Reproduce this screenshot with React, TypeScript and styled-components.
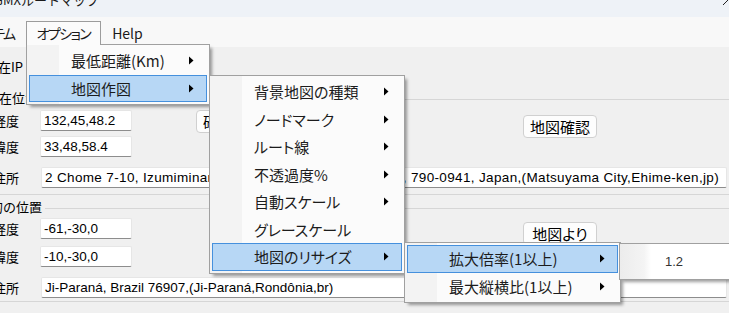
import React from "react";
import styled, { createGlobalStyle } from "styled-components";

type MenuEntry = { label: string; sub?: boolean; active?: boolean };

const optionMenu: MenuEntry[] = [
  { label: "最低距離(Km)", sub: true },
  { label: "地図作図", sub: true, active: true },
];

const drawMenu: MenuEntry[] = [
  { label: "背景地図の種類", sub: true },
  { label: "ノードマーク", sub: true },
  { label: "ルート線", sub: true },
  { label: "不透過度%", sub: true },
  { label: "自動スケール", sub: true },
  { label: "グレースケール" },
  { label: "地図のリサイズ", sub: true, active: true },
];

const resizeMenu: MenuEntry[] = [
  { label: "拡大倍率(1以上)", sub: true, active: true },
  { label: "最大縦横比(1以上)", sub: true },
];

const GlobalStyle = createGlobalStyle`
  html, body {
    margin: 0;
    padding: 0;
    background: #f0f0f0;
  }
  body {
    font-family: "Noto Sans CJK JP", "Liberation Sans", sans-serif;
  }
`;

const Window = styled.div`
  position: relative;
  width: 729px;
  height: 313px;
  overflow: hidden;
  background: #f0f0f0;
  display: flex;
  flex-direction: column;
`;

const TitleBar = styled.header`
  flex: none;
  height: 17px;
  background: #eef2f7;
  display: flex;
  justify-content: space-between;
  align-items: flex-start;
  overflow: hidden;
`;

const Title = styled.span`
  margin: -9px 0 0 -6px;
  font-size: 13px;
  line-height: 17px;
  color: #1a1a1a;
  white-space: nowrap;
`;

const CloseGlyph = styled.svg`
  flex: none;
  margin: -13px -12px 0 0;
`;

const MenuBar = styled.nav`
  flex: none;
  height: 30px;
  background: #f8f8f8;
  display: flex;
  align-items: flex-start;
  padding-top: 4px;
  box-sizing: border-box;
  font-size: 14px;
  font-feature-settings: "palt";
  color: #1a1a1a;
`;

const BarItem = styled.div<{ $open?: boolean; $shift?: number; $tight?: boolean }>`
  position: relative;
  z-index: 3;
  box-sizing: border-box;
  height: ${(p) => (p.$open ? 24 : 23)}px;
  margin-left: ${(p) => p.$shift ?? 0}px;
  padding: 0 10px;
  line-height: 22px;
  letter-spacing: ${(p) => (p.$tight ? "-1.6px" : "0")};
  border: 1px solid ${(p) => (p.$open ? "#9c9c9c" : "transparent")};
  border-bottom: none;
  background: ${(p) => (p.$open ? "#fbfbfb" : "transparent")};
  white-space: nowrap;
`;

const Form = styled.main`
  flex: 1;
  margin-left: -20px;
  padding-top: 12px;
  display: flex;
  flex-direction: column;
  font-size: 13px;
  color: #000;
`;

const IpLabel = styled.div`
  padding-left: 5px;
  line-height: 16px;
`;

const Group = styled.section<{ $mt: number; $pb: number }>`
  margin-top: ${(p) => p.$mt}px;
  padding-bottom: ${(p) => p.$pb}px;
  border-top: 1px solid #d6d6d6;
  border-bottom: 1px solid #d6d6d6;
`;

const Caption = styled.div<{ $indent: number }>`
  width: fit-content;
  margin: -10px 0 0 ${(p) => p.$indent}px;
  line-height: 16px;
  background: #f0f0f0;
  padding-right: 3px;
`;

const Fields = styled.div<{ $mt: number; $rows: string }>`
  margin-top: ${(p) => p.$mt}px;
  padding-left: 13px;
  display: grid;
  grid-template-columns: 47px 92px 64px 327px 74px 1fr;
  grid-template-rows: ${(p) => p.$rows};
  align-items: start;
`;

const FieldLabel = styled.label<{ $row: number }>`
  grid-column: 1;
  grid-row: ${(p) => p.$row};
  line-height: 21px;
  white-space: nowrap;
`;

const TextBox = styled.div<{ $row: number; $wide?: boolean; $spacing?: number }>`
  grid-column: ${(p) => (p.$wide ? "2 / -1" : "2")};
  grid-row: ${(p) => p.$row};
  margin: ${(p) => (p.$wide ? "0 2px 0 1px" : "0")};
  height: 21px;
  box-sizing: border-box;
  padding-left: 3px;
  background: #ffffff;
  border: 1px solid #e6e6e6;
  border-bottom-color: #8d8d8d;
  border-radius: 2px;
  font-family: "Liberation Sans", Arial, sans-serif;
  font-size: 13.5px;
  letter-spacing: ${(p) => p.$spacing ?? 0}px;
  line-height: 19px;
  white-space: nowrap;
  overflow: hidden;
`;

const FormButton = styled.button<{ $col: number; $span?: number; $mt?: number }>`
  grid-column: ${(p) => p.$col};
  grid-row: 1 / span ${(p) => p.$span ?? 1};
  justify-self: start;
  margin-top: ${(p) => p.$mt ?? 0}px;
  height: 23px;
  padding: 0 6px;
  min-width: 40px;
  background: #fdfdfd;
  border: 1px solid #d0d0d0;
  border-radius: 4px;
  font-family: "Noto Sans CJK JP", sans-serif;
  font-feature-settings: "palt";
  font-size: 15px;
  line-height: 20px;
  color: #000;
`;

const MapButton = styled(FormButton)`
  width: 74px;
`;

const Popup = styled.div<{ $x: number; $y: number; $w: number }>`
  position: absolute;
  z-index: 2;
  left: ${(p) => p.$x}px;
  top: ${(p) => p.$y}px;
  width: ${(p) => p.$w}px;
  box-sizing: border-box;
  padding: 2px;
  border: 1px solid #a0a0a0;
  background: linear-gradient(to right, #f3f3f3 32px, #fbfbfb 32px);
  box-shadow: 3px 3px 3px -1px rgba(0, 0, 0, 0.38);
  font-size: 15px;
  font-feature-settings: "palt";
  color: #1c1c1c;
`;

const PopupRow = styled.div<{ $active?: boolean }>`
  height: 27.5px;
  box-sizing: border-box;
  display: flex;
  align-items: center;
  justify-content: space-between;
  padding: 0 12px 0 41px;
  border: 1px solid ${(p) => (p.$active ? "#4590dd" : "transparent")};
  background: ${(p) => (p.$active ? "#b7d7f5" : "transparent")};
  white-space: nowrap;
`;

const EditPopup = styled.div`
  position: absolute;
  z-index: 2;
  left: 619px;
  top: 243px;
  width: 130px;
  height: 37px;
  box-sizing: border-box;
  padding-left: 45px;
  display: flex;
  align-items: center;
  border: 1px solid #a0a0a0;
  background: linear-gradient(to right, #ececec 0, #f4f4f4 24px, #ffffff 31px);
  box-shadow: 3px 3px 3px -1px rgba(0, 0, 0, 0.38);
  font-family: "Liberation Sans", Arial, sans-serif;
  font-size: 13px;
  color: #333;
`;

function Arrow() {
  return (
    <svg width="5" height="9" viewBox="0 0 5 9">
      <polygon points="0,0.5 4.5,4.5 0,8.5" fill="#000" />
    </svg>
  );
}

function Menu({ x, y, w, items }: { x: number; y: number; w: number; items: MenuEntry[] }) {
  return (
    <Popup $x={x} $y={y} $w={w}>
      {items.map((it) => (
        <PopupRow key={it.label} $active={it.active}>
          <span>{it.label}</span>
          {it.sub && <Arrow />}
        </PopupRow>
      ))}
    </Popup>
  );
}

export default function App() {
  return (
    <>
      <GlobalStyle />
      <Window>
        <TitleBar>
          <Title>GMXルートマップ</Title>
          <CloseGlyph width="20" height="20" viewBox="0 0 20 20">
            <path d="M2 2 L18 18 M18 2 L2 18" stroke="#222" strokeWidth="1" />
          </CloseGlyph>
        </TitleBar>

        <MenuBar>
          <BarItem $shift={-41} $tight>
            システム
          </BarItem>
          <BarItem $open $tight>
            オプション
          </BarItem>
          <BarItem>Help</BarItem>
        </MenuBar>

        <Form>
          <IpLabel>現在IP</IpLabel>

          <Group $mt={24} $pb={6}>
            <Caption $indent={6}>現在位置</Caption>
            <Fields $mt={4} $rows="26px 31px 21px">
              <FieldLabel $row={1}>経度</FieldLabel>
              <TextBox $row={1}>132,45,48.2</TextBox>
              <FormButton $col={4}>確認</FormButton>
              <MapButton $col={5} $span={2} $mt={5}>
                地図確認
              </MapButton>
              <FieldLabel $row={2}>緯度</FieldLabel>
              <TextBox $row={2}>33,48,58.4</TextBox>
              <FieldLabel $row={3}>住所</FieldLabel>
              <TextBox $row={3} $wide $spacing={0.35}>
                2 Chome 7-10, Izumiminami, Matsuyama-shi, Ehime-ken, 790-0941, Japan,(Matsuyama City,Ehime-ken,jp)
              </TextBox>
            </Fields>
          </Group>

          <Group $mt={13} $pb={3}>
            <Caption $indent={-3}>目的の位置</Caption>
            <Fields $mt={3} $rows="28px 31px 21px">
              <FieldLabel $row={1}>経度</FieldLabel>
              <TextBox $row={1}>-61,-30,0</TextBox>
              <MapButton $col={5} $span={2} $mt={4}>
                地図より
              </MapButton>
              <FieldLabel $row={2}>緯度</FieldLabel>
              <TextBox $row={2}>-10,-30,0</TextBox>
              <FieldLabel $row={3}>住所</FieldLabel>
              <TextBox $row={3} $wide>
                Ji-Paraná, Brazil 76907,(Ji-Paraná,Rondônia,br)
              </TextBox>
            </Fields>
          </Group>
        </Form>

        <Menu x={26} y={44} w={184} items={optionMenu} />
        <Menu x={209} y={75} w={196} items={drawMenu} />
        <Menu x={404} y={242} w={217} items={resizeMenu} />
        <EditPopup>1.2</EditPopup>
      </Window>
    </>
  );
}
